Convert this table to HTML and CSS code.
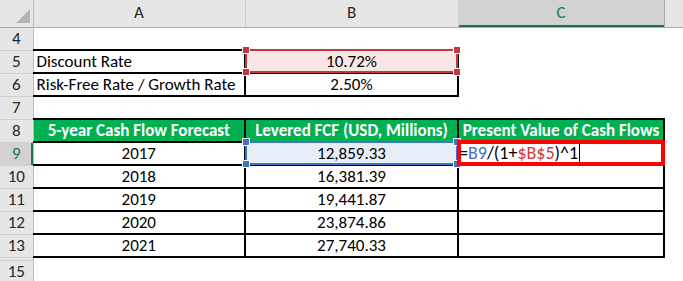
FILE: index.html
```html
<!DOCTYPE html>
<html>
<head>
<meta charset="utf-8">
<link rel="stylesheet" href="styles.css">
</head>
<body>
<table class="sheet">
  <colgroup>
    <col class="col-rh"><col class="col-a"><col class="col-b"><col class="col-c"><col class="col-d">
  </colgroup>
  <thead>
    <tr class="hdr">
      <th class="corner"><span class="tri"></span></th>
      <th>A</th>
      <th>B</th>
      <th class="hsel">C</th>
      <th></th>
    </tr>
  </thead>
  <tbody>
    <tr><th>4</th><td></td><td></td><td></td><td></td></tr>
    <tr class="bt">
      <th>5</th>
      <td class="bd left">Discount Rate</td>
      <td class="bd ctr sel-red">
        <div class="selbox red"><span class="h tl"></span><span class="h tr"></span><span class="h bl"></span><span class="h br"></span></div>
        <span class="val">10.72%</span>
      </td>
      <td></td><td></td>
    </tr>
    <tr>
      <th>6</th>
      <td class="bd left">Risk-Free Rate / Growth Rate</td>
      <td class="bd ctr">2.50%</td>
      <td></td><td></td>
    </tr>
    <tr><th>7</th><td></td><td></td><td></td><td></td></tr>
    <tr class="green bt">
      <th>8</th>
      <td class="bd ctr g">5-year Cash Flow Forecast</td>
      <td class="bd ctr g">Levered FCF (USD, Millions)</td>
      <td class="bd ctr g">Present Value of Cash Flows</td>
      <td></td>
    </tr>
    <tr>
      <th class="rsel">9</th>
      <td class="bd ctr">2017</td>
      <td class="bd ctr sel-blue">
        <div class="selbox blue"><span class="h tl"></span><span class="h tr"></span><span class="h bl"></span><span class="h br"></span></div>
        <span class="val">12,859.33</span>
      </td>
      <td class="bd edit">
        <div class="editbox"></div>
        <span class="formula">=<span class="ref-b">B9</span>/(1+<span class="ref-r">$B$5</span>)^1<span class="caret"></span></span>
      </td>
      <td></td>
    </tr>
    <tr><th>10</th><td class="bd ctr">2018</td><td class="bd ctr">16,381.39</td><td class="bd"></td><td></td></tr>
    <tr><th>11</th><td class="bd ctr">2019</td><td class="bd ctr">19,441.87</td><td class="bd"></td><td></td></tr>
    <tr><th>12</th><td class="bd ctr">2020</td><td class="bd ctr">23,874.86</td><td class="bd"></td><td></td></tr>
    <tr><th>13</th><td class="bd ctr">2021</td><td class="bd ctr">27,740.33</td><td class="bd"></td><td></td></tr>
    <tr class="hidden-row"><th></th><td></td><td></td><td></td><td></td></tr>
    <tr><th>15</th><td></td><td></td><td></td><td></td></tr>
  </tbody>
</table>
</body>
</html>
```
FILE: styles.css
```css
html, body {
  margin: 0;
  background: #ffffff;
  overflow: hidden;
}
body {
  font-family: Carlito, Calibri, Lato, "Liberation Sans", sans-serif;
  font-size: 17px;
  color: #000;
}
.sheet {
  border-collapse: collapse;
  table-layout: fixed;
  width: 683px;
}
.col-rh { width: 33px; }
.col-a { width: 212px; }
.col-b { width: 213px; }
.col-c { width: 206px; }
.col-d { width: 19px; }

.sheet th, .sheet td {
  padding: 0 3px;
  height: 23px;
  line-height: 20px;
  white-space: nowrap;
  overflow: visible;
  box-sizing: border-box;
}
.sheet thead th {
  height: 27px;
  background: #e6e6e6;
  font-weight: normal;
  color: #262626;
  text-align: center;
  border-right: 1px solid #d0d0d0;
  border-bottom: 1px solid #ababab;
}
.sheet thead th.corner {
  position: relative;
  border-right: 1px solid #bdbdbd;
}
.tri {
  position: absolute;
  right: 3px;
  bottom: 4px;
  width: 0;
  height: 0;
  border-left: 14px solid transparent;
  border-bottom: 14px solid #b5b5b5;
}
.sheet thead th.hsel {
  background: #d2d2d2;
  color: #217346;
  border-left: 1px solid #ababab;
  border-right: 1px solid #ababab;
  box-shadow: inset 0 -2px 0 #217346;
}
.sheet tbody th {
  background: #e6e6e6;
  font-weight: normal;
  color: #262626;
  text-align: center;
  padding: 0;
  border-right: 1px solid #bdbdbd;
  border-bottom: 1px solid #cfcfcf;
}
.sheet tbody th.rsel {
  background: #d2d2d2;
  color: #217346;
  box-shadow: inset -2px 0 0 #217346;
}
.hidden-row th, .hidden-row td {
  height: 3px;
  padding: 0;
  font-size: 0;
  line-height: 0;
}
.hidden-row th {
  border-bottom: 1px solid #ababab;
}

.bd {
  border-right: 2px solid #000;
  border-bottom: 2px solid #000;
}
.bt .bd { border-top: 2px solid #000; }
.left { text-align: left; padding-left: 4px; }
.ctr { text-align: center; }
.g {
  background: #00b050;
  color: #ffffff;
  font-weight: bold;
}

.sel-red, .sel-blue, .edit { position: relative; }
.sel-red { background: #f9e7e7; }
.sel-blue { background: #e8eef8; }
.val { position: relative; }

.selbox {
  position: absolute;
  left: -1px;
  top: -2px;
  right: -1px;
  bottom: -1px;
  border: 2px solid;
}
.selbox.red { border-color: #c4373f; }
.selbox.blue { border-color: #4472c4; }
.h {
  position: absolute;
  width: 6px;
  height: 6px;
  border: 1px solid #fff;
}
.red .h { background: #c4373f; }
.blue .h { background: #4472c4; }
.h.tl { left: -5px; top: -5px; }
.h.tr { right: -5px; top: -5px; }
.h.bl { left: -5px; bottom: -5px; }
.h.br { right: -5px; bottom: -5px; }

.editbox {
  position: absolute;
  left: -2px;
  top: -3px;
  right: -2px;
  bottom: -2px;
  border: 4px solid #ff0000;
}
.sheet td.edit { padding-left: 0; }
.formula {
  position: relative;
  font-size: 18px;
  color: #000;
}
.ref-b { color: #3f6fc8; }
.ref-r { color: #d0393f; }
.caret {
  display: inline-block;
  width: 1px;
  height: 18px;
  background: #000;
  vertical-align: -3px;
  margin-left: 1px;
}
```
